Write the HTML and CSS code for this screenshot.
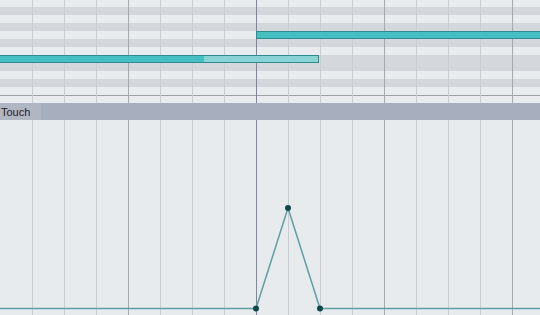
FILE: index.html
```html
<!DOCTYPE html>
<html>

<head>
    <link rel="stylesheet" href="styles.css">
</head>

<body>
    <div class="editor">
        <!-- note grid -->
        <div class="roll">
            <div class="row light first"></div>
            <div class="row dark"></div>
            <div class="row light"></div>
            <div class="row dark"></div>
            <div class="row light"></div>
            <div class="row dark"></div>
            <div class="row light"></div>
            <div class="row dark"></div>
            <div class="row dark"></div>
            <div class="row light"></div>
            <div class="row dark"></div>
            <div class="row light last"></div>
            <div class="row light tail"></div>

            <div class="note note-right"></div>
            <div class="note note-left">
                <div class="note-part solid"></div>
                <div class="note-part pale"></div>
            </div>
        </div>

        <!-- automation lane header -->
        <div class="lane-head">
            <div class="lane-label">Touch</div>
            <div class="lane-fill"></div>
        </div>

        <!-- automation lane -->
        <div class="lane">
            <svg class="curve" width="540" height="195" viewBox="0 120 540 195">
                <polyline points="0,308.5 256,308.5 288,208 320,308.5 540,308.5" fill="none" stroke="#5c9fa1" stroke-width="1.5" />
                <circle cx="256" cy="308.5" r="3" fill="#0f4a49" />
                <circle cx="288" cy="208" r="3" fill="#0f4a49" />
                <circle cx="320" cy="308.5" r="3" fill="#0f4a49" />
            </svg>
        </div>
    </div>
</body>
</html>
```

FILE: styles.css
```css
body,
html {
    margin: 0;
    height: 100%;
    overflow: hidden;
}

body {
    background: #e8ebee;
    font-family: "Liberation Sans", Arial, sans-serif;
}

.editor {
    width: 540px;
    height: 315px;
    display: flex;
    flex-direction: column;
}

.roll {
    position: relative;
    display: flex;
    flex-direction: column;
}

/* beat lines every 32px, bar lines every 128px, cursor at 256 */
.roll::after,
.lane::before {
    content: "";
    position: absolute;
    left: 32px;
    top: 0;
    right: 0;
    bottom: 0;
    pointer-events: none;
    background-image:
        linear-gradient(to right, transparent 224px, #7f879d 224px, #7f879d 225px, transparent 225px),
        linear-gradient(to right, #a6abb3 1px, transparent 1px),
        linear-gradient(to right, #c9cdd3 1px, transparent 1px);
    background-size: 100% 100%, 128px 100%, 32px 100%;
    background-position: 0 0, 96px 0, 0 0;
    background-repeat: no-repeat, repeat-x, repeat-x;
}

.row {
    height: 8px;
}

.row.first {
    height: 7px;
}

.row.last {
    border-bottom: 1px solid #9fa3a9;
}

.row.tail {
    height: 7px;
}

.light {
    background: #e9ecef;
}

.dark {
    background: #d4d8dd;
}

.note {
    position: absolute;
    height: 8px;
    box-sizing: border-box;
    z-index: 2;
}

.note-right {
    left: 256px;
    top: 31px;
    width: 290px;
    background: #46bfc3;
    border: 1px solid #2c8c8f;
}

.note-left {
    left: -2px;
    top: 55px;
    width: 321px;
    display: flex;
    border: 1px solid #2c8c8f;
}

.note-part.solid {
    width: 205px;
    background: #46bfc3;
}

.note-part.pale {
    flex: 1;
    background: #88d3d4;
}

.lane-head {
    height: 17px;
    display: flex;
    background: #a7aebd;
}

.lane-label {
    width: 40px;
    padding-left: 1px;
    background: #b1b6c3;
    color: #1f2228;
    font-size: 11px;
    line-height: 18px;
}

.lane-fill {
    flex: 1;
}

.lane {
    position: relative;
    flex: 1;
}

.curve {
    position: absolute;
    left: 0;
    top: 0;
    z-index: 2;
}
```
